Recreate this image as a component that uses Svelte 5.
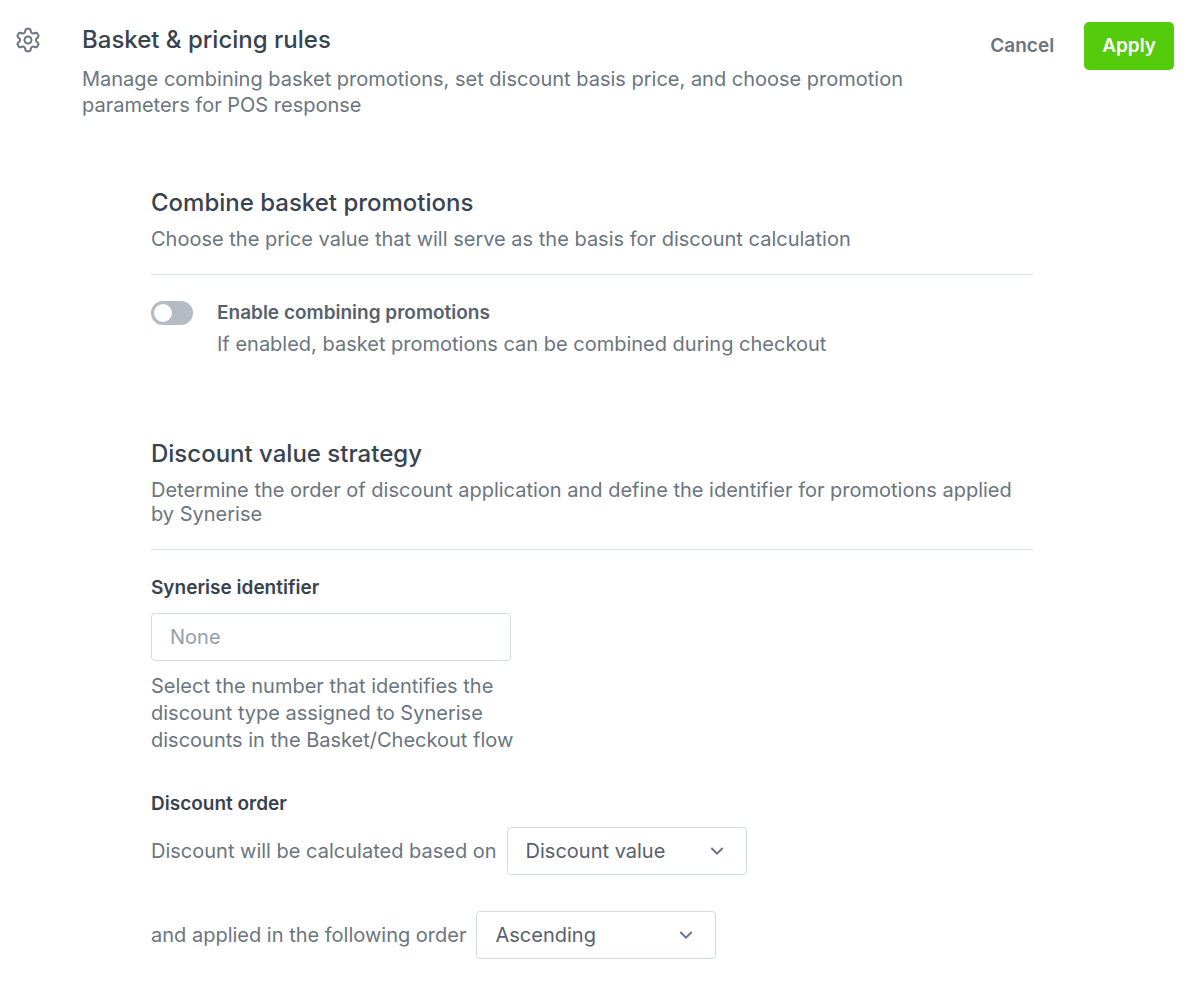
<!-- BasketPricingRules.svelte -->
<script>
    let combining = $state(false);
    let identifier = $state("");
    let basis = $state("value");
    let order = $state("asc");
</script>

{#snippet chevron()}
    <svg class="chevron" width="24" height="24" viewBox="0 0 24 24" aria-hidden="true">
        <path d="M6.3 9 12 14.700 17.700 9" />
    </svg>
{/snippet}

<div class="page">
    <header class="header">
        <svg class="gear" width="28" height="28" viewBox="-14 -14 28 28" aria-hidden="true">
            <path
                d="M-2.9-8.4C-2.7-10-2.6-11.200-1-11.200H1C2.6-11.200 2.7-10 2.9-8.4
                C3.2-7 4.46-6.27 5.82-6.71C7.31-7.34 8.49-7.9 9.29-6.52L10.29-4.78C11.09-3.4 10.01-2.66 8.72-1.69
                C7.66-.73 7.66.73 8.72 1.69C10.01 2.66 11.09 3.4 10.29 4.78L9.29 6.52C8.49 7.9 7.31 7.34 5.82 6.71
                C4.46 6.27 3.2 7 2.9 8.4C2.7 10 2.6 11.200 1 11.200H-1C-2.6 11.200-2.7 10-2.9 8.4
                C-3.2 7-4.46 6.27-5.82 6.71C-7.31 7.34-8.49 7.9-9.29 6.52L-10.29 4.78C-11.09 3.4-10.01 2.66-8.72 1.69
                C-7.66.73-7.66-.73-8.72-1.69C-10.01-2.66-11.09-3.4-10.29-4.78L-9.29-6.52C-8.49-7.9-7.31-7.34-5.82-6.71
                C-4.46-6.27-3.2-7-2.9-8.4Z"
            />
            <circle r="3.5" />
        </svg>
        <div class="heading">
            <h1>Basket &amp; pricing rules</h1>
            <p>Manage combining basket promotions, set discount basis price, and choose promotion parameters for POS response</p>
        </div>
        <div class="actions">
            <button type="button" class="cancel">Cancel</button>
            <button type="button" class="apply">Apply</button>
        </div>
    </header>

    <main class="content">
        <section>
            <div class="section-head">
                <h2>Combine basket promotions</h2>
                <p>Choose the price value that will serve as the basis for discount calculation</p>
            </div>
            <div class="toggle-row">
                <input id="combining" class="toggle" type="checkbox" role="switch" bind:checked={combining} />
                <div>
                    <label class="toggle-label" for="combining">Enable combining promotions</label>
                    <p class="toggle-hint">If enabled, basket promotions can be combined during checkout</p>
                </div>
            </div>
        </section>

        <section>
            <div class="section-head">
                <h2>Discount value strategy</h2>
                <p>Determine the order of discount application and define the identifier for promotions applied by Synerise</p>
            </div>
            <div class="field">
                <label class="field-label" for="identifier">Synerise identifier</label>
                <input id="identifier" class="text-input" type="text" placeholder="None" bind:value={identifier} />
                <p class="hint">Select the number that identifies the discount type assigned to Synerise discounts in the Basket/Checkout flow</p>
            </div>
            <h3 class="field-label">Discount order</h3>
            <div class="order-rows">
                <div class="order-row">
                    <label for="basis">Discount will be calculated based on</label>
                    <div class="select">
                        <select id="basis" bind:value={basis}>
                            <option value="value">Discount value</option>
                        </select>
                        {@render chevron()}
                    </div>
                </div>
                <div class="order-row">
                    <label for="order">and applied in the following order</label>
                    <div class="select">
                        <select id="order" bind:value={order}>
                            <option value="asc">Ascending</option>
                            <option value="desc">Descending</option>
                        </select>
                        {@render chevron()}
                    </div>
                </div>
            </div>
        </section>
    </main>
</div>

<style>
    :global(body) {
        margin: 0;
        background: #ffffff;
    }

    .page {
        font-family: Inter, "Liberation Sans", sans-serif;
        font-size: 20px;
        line-height: 24px;
        color: #6a7580;
    }

    h1, h2, h3, p {
        margin: 0;
    }

    h1, h2 {
        font-size: 24px;
        line-height: 32px;
        font-weight: 500;
        color: #384350;
    }

    button, input, select {
        font: inherit;
        box-sizing: border-box;
    }

    .header {
        display: flex;
        align-items: flex-start;
        padding: 22px 26px 0 14px;
    }

    .gear {
        flex: none;
        margin: 4px 40px 0 0;
        fill: none;
        stroke: #6a7580;
        stroke-width: 2;
        stroke-linejoin: round;
    }

    .heading {
        flex: 1;
        padding-top: 2px;
    }

    .heading p {
        max-width: 840px;
        margin-top: 10px;
        line-height: 26px;
    }

    .actions {
        display: flex;
        gap: 12px;
    }

    .actions button {
        height: 48px;
        padding: 0 18px;
        border: 0;
        border-radius: 5px;
        font-size: 19px;
        font-weight: 600;
        cursor: pointer;
    }

    .actions .cancel {
        background: none;
        color: #6a7580;
    }

    .actions .apply {
        background: #54cb0b;
        color: #ffffff;
    }

    .content {
        display: flex;
        flex-direction: column;
        gap: 82px;
        padding: 69px 167px 24px 151px;
    }

    .section-head {
        padding-bottom: 23px;
        border-bottom: 1px solid #dbe0e3;
    }

    .section-head p {
        margin-top: 8px;
    }

    .toggle-row {
        display: flex;
        align-items: flex-start;
        gap: 24px;
        padding-top: 26px;
    }

    .toggle {
        appearance: none;
        flex: none;
        width: 42px;
        height: 24px;
        margin: 0;
        padding: 3px;
        border-radius: 12px;
        background: #b4bbc3;
        cursor: pointer;
    }

    .toggle::before {
        content: "";
        display: block;
        width: 18px;
        height: 18px;
        border-radius: 50%;
        background: #ffffff;
        transition: transform 0.2s;
    }

    .toggle:checked {
        background: #54cb0b;
    }

    .toggle:checked::before {
        transform: translateX(18px);
    }

    .toggle-label {
        display: block;
        font-size: 19px;
        font-weight: 600;
        color: #57616d;
    }

    .toggle-hint {
        margin-top: 7px;
    }

    .field {
        max-width: 368px;
        padding: 26px 0 38px;
    }

    .field-label {
        display: block;
        font-size: 19px;
        line-height: 24px;
        font-weight: 600;
        color: #384350;
    }

    .text-input {
        width: 360px;
        max-width: 100%;
        height: 48px;
        margin: 13px 0 12px;
        padding: 0 18px;
        border: 1px solid #d5dce0;
        border-radius: 4px;
        color: #57616d;
    }

    .text-input::placeholder {
        color: #949eaa;
        opacity: 1;
    }

    .hint {
        line-height: 27px;
    }

    .order-rows {
        display: flex;
        flex-direction: column;
        gap: 36px;
        padding-top: 11px;
    }

    .order-row {
        display: flex;
        align-items: center;
        gap: 10px;
    }

    .select {
        position: relative;
        width: 240px;
    }

    .select select {
        appearance: none;
        width: 100%;
        height: 48px;
        padding: 0 48px 0 18px;
        border: 1px solid #d5dce0;
        border-radius: 4px;
        background: #ffffff;
        color: #57616d;
    }

    .chevron {
        position: absolute;
        top: 12px;
        right: 18px;
        fill: none;
        stroke: #6a7580;
        stroke-width: 2;
        pointer-events: none;
    }
</style>
